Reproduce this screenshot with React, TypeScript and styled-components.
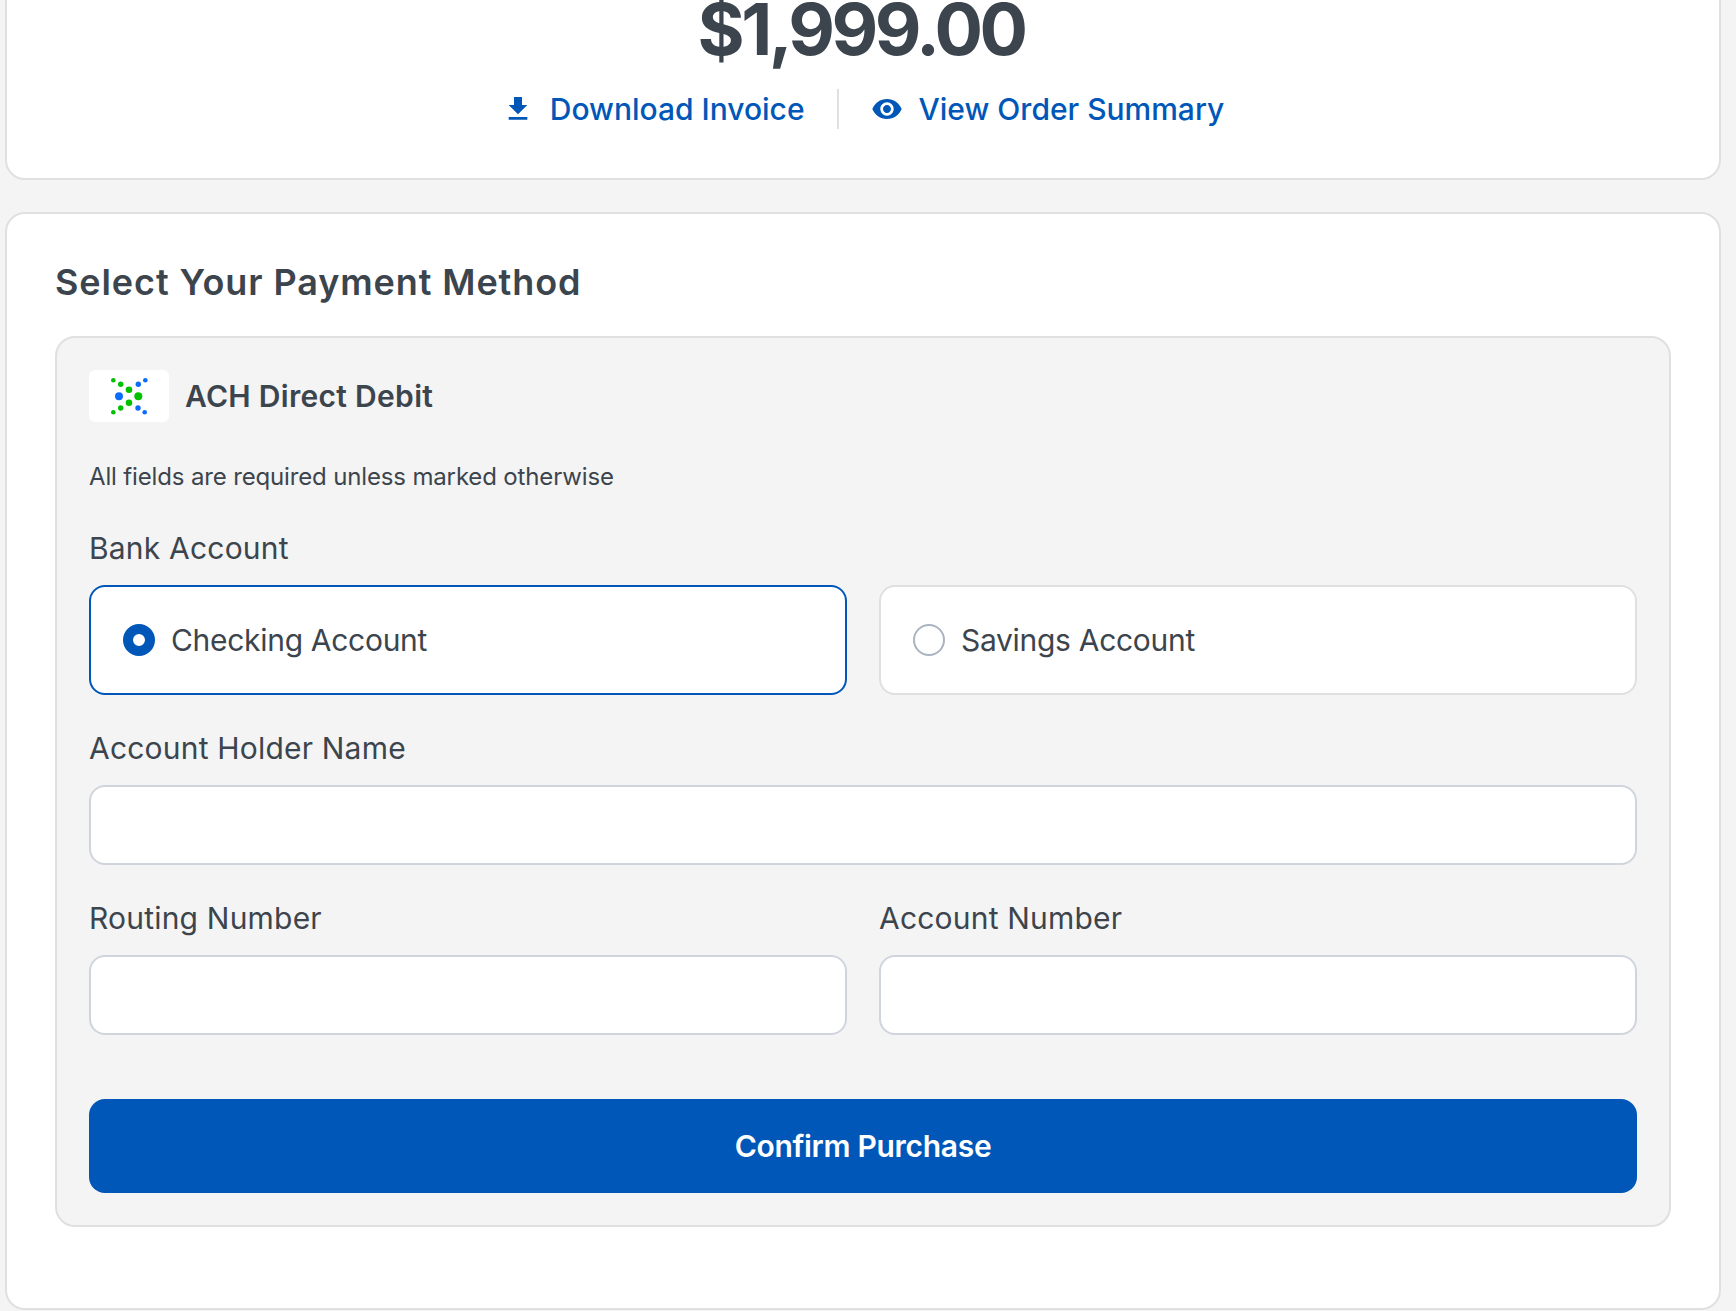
import styled, { createGlobalStyle } from 'styled-components'

const colors = {
  page: '#f4f4f4',
  white: '#ffffff',
  text: '#3c454d',
  blue: '#0057b8',
  line: '#e0e0e0',
  inputLine: '#d0d5dd',
  radioLine: '#aab4c0',
  green: '#00c000',
  logoBlue: '#0a6cff',
}

const GlobalStyle = createGlobalStyle`
  html, body {
    margin: 0;
    padding: 0;
    background: ${colors.page};
  }
  * {
    box-sizing: border-box;
  }
`

const logoDots = [
  { x: 24.3, y: 10.3, r: 2.3, fill: colors.green },
  { x: 31.7, y: 14.3, r: 2.7, fill: colors.green },
  { x: 40, y: 19.7, r: 3.3, fill: colors.green },
  { x: 49.3, y: 14.3, r: 2.7, fill: colors.logoBlue },
  { x: 56.3, y: 10.3, r: 2.3, fill: colors.logoBlue },
  { x: 30, y: 26.3, r: 4, fill: colors.logoBlue },
  { x: 49.3, y: 26.3, r: 4, fill: colors.green },
  { x: 40, y: 32.7, r: 3.3, fill: colors.green },
  { x: 31.7, y: 38, r: 2.7, fill: colors.green },
  { x: 49, y: 38, r: 2.7, fill: colors.logoBlue },
  { x: 24.3, y: 42.3, r: 2.3, fill: colors.green },
  { x: 55.7, y: 42.3, r: 2.3, fill: colors.logoBlue },
]

const App = () => {
  return (
    <Page>
      <GlobalStyle />
      <SummaryCard>
        <Price>$1,999.00</Price>
        <LinkRow>
          <LinkItem href="#">
            <svg width="32" height="32" viewBox="0 0 24 24" fill={colors.blue}>
              <path d="M19 9h-4V3H9v6H5l7 7 7-7zM5 18v2h14v-2H5z" />
            </svg>
            Download Invoice
          </LinkItem>
          <LinkDivider />
          <LinkItem href="#">
            <svg width="32" height="32" viewBox="0 0 24 24" fill={colors.blue}>
              <path d="M12 4.5C7 4.5 2.73 7.61 1 12c1.73 4.39 6 7.5 11 7.5s9.27-3.11 11-7.5c-1.73-4.39-6-7.5-11-7.5zM12 17c-2.76 0-5-2.24-5-5s2.24-5 5-5 5 2.24 5 5-2.24 5-5 5zm0-8c-1.66 0-3 1.34-3 3s1.34 3 3 3 3-1.34 3-3-1.34-3-3-3z" />
            </svg>
            View Order Summary
          </LinkItem>
        </LinkRow>
      </SummaryCard>
      <PaymentCard>
        <Heading>Select Your Payment Method</Heading>
        <MethodPanel>
          <MethodHeader>
            <LogoBox>
              <svg width="80" height="52" viewBox="0 0 80 52">
                {logoDots.map((dot) => (
                  <circle key={`${dot.x}-${dot.y}`} cx={dot.x} cy={dot.y} r={dot.r} fill={dot.fill} />
                ))}
              </svg>
            </LogoBox>
            <MethodName>ACH Direct Debit</MethodName>
          </MethodHeader>
          <Note>All fields are required unless marked otherwise</Note>
          <Form>
            <Field>
              <Label>Bank Account</Label>
              <TwoColumns>
                <RadioCard selected>
                  <RadioMark selected />
                  Checking Account
                </RadioCard>
                <RadioCard>
                  <RadioMark />
                  Savings Account
                </RadioCard>
              </TwoColumns>
            </Field>
            <Field>
              <Label>Account Holder Name</Label>
              <Input type="text" />
            </Field>
            <TwoColumns>
              <Field>
                <Label>Routing Number</Label>
                <Input type="text" />
              </Field>
              <Field>
                <Label>Account Number</Label>
                <Input type="text" />
              </Field>
            </TwoColumns>
          </Form>
          <ConfirmButton type="button">Confirm Purchase</ConfirmButton>
        </MethodPanel>
      </PaymentCard>
    </Page>
  )
}

export default App

const Page = styled.div`
  display: flex;
  flex-direction: column;
  gap: 32px;
  height: 1311px;
  padding: 0 15px 0 5px;
  overflow: hidden;
  background: ${colors.page};
  color: ${colors.text};
  font-family: Inter, 'Liberation Sans', sans-serif;
`
const SummaryCard = styled.section`
  display: flex;
  flex-direction: column;
  align-items: center;
  flex-shrink: 0;
  height: 280px;
  margin-top: -100px;
  padding-top: 82px;
  border: 2px solid ${colors.line};
  border-radius: 20px;
  background: ${colors.white};
`
const Price = styled.div`
  margin-right: 4px;
  font-size: 72px;
  font-weight: 700;
  line-height: 90px;
  letter-spacing: -3.5px;
`
const LinkRow = styled.div`
  display: flex;
  align-items: center;
  gap: 32px;
  margin-top: 15px;
  height: 40px;
`
const LinkItem = styled.a`
  display: flex;
  align-items: center;
  gap: 16px;
  color: ${colors.blue};
  font-size: 30px;
  font-weight: 500;
  text-decoration: none;
`
const LinkDivider = styled.div`
  width: 2px;
  height: 40px;
  background: ${colors.line};
`
const PaymentCard = styled.section`
  flex-shrink: 0;
  height: 1098px;
  padding: 46px 48px 0;
  border: 2px solid ${colors.line};
  border-radius: 20px;
  background: ${colors.white};
`
const Heading = styled.h2`
  margin: 0 0 32px;
  font-size: 36px;
  font-weight: 600;
  line-height: 44px;
  letter-spacing: 0.9px;
`
const MethodPanel = styled.div`
  display: flex;
  flex-direction: column;
  padding: 32px;
  border: 2px solid ${colors.line};
  border-radius: 20px;
  background: ${colors.page};
`
const MethodHeader = styled.div`
  display: flex;
  align-items: center;
  gap: 16px;
`
const LogoBox = styled.div`
  display: flex;
  width: 80px;
  height: 52px;
  border-radius: 6px;
  background: ${colors.white};
`
const MethodName = styled.div`
  font-size: 30px;
  font-weight: 600;
  letter-spacing: 0.3px;
`
const Note = styled.p`
  margin: 39px 0 37px;
  font-size: 24px;
  line-height: 32px;
  letter-spacing: -0.15px;
`
const Form = styled.div`
  display: flex;
  flex-direction: column;
  gap: 35px;
`
const Field = styled.div`
  display: flex;
  flex-direction: column;
  gap: 19px;
`
const Label = styled.label`
  font-size: 30px;
  line-height: 36px;
  letter-spacing: 0.2px;
`
const TwoColumns = styled.div`
  display: grid;
  grid-template-columns: 1fr 1fr;
  gap: 32px;
`
const RadioCard = styled.div<{ selected?: boolean }>`
  display: flex;
  align-items: center;
  gap: 16px;
  height: 110px;
  padding: 0 32px;
  border: 2px solid ${(props) => (props.selected ? colors.blue : colors.line)};
  border-radius: 16px;
  background: ${colors.white};
  font-size: 30px;
  letter-spacing: -0.3px;
`
const RadioMark = styled.span<{ selected?: boolean }>`
  flex-shrink: 0;
  width: 32px;
  height: 32px;
  border-radius: 50%;
  border: ${(props) => (props.selected ? `10px solid ${colors.blue}` : `2px solid ${colors.radioLine}`)};
  background: ${colors.white};
`
const Input = styled.input`
  width: 100%;
  height: 80px;
  padding: 0 24px;
  border: 2px solid ${colors.inputLine};
  border-radius: 16px;
  outline: none;
  background: ${colors.white};
  font-family: inherit;
  font-size: 30px;
`
const ConfirmButton = styled.button`
  height: 94px;
  margin-top: 64px;
  border: none;
  border-radius: 16px;
  background: ${colors.blue};
  color: ${colors.white};
  font-family: inherit;
  font-size: 30px;
  font-weight: 600;
  letter-spacing: -0.3px;
`
